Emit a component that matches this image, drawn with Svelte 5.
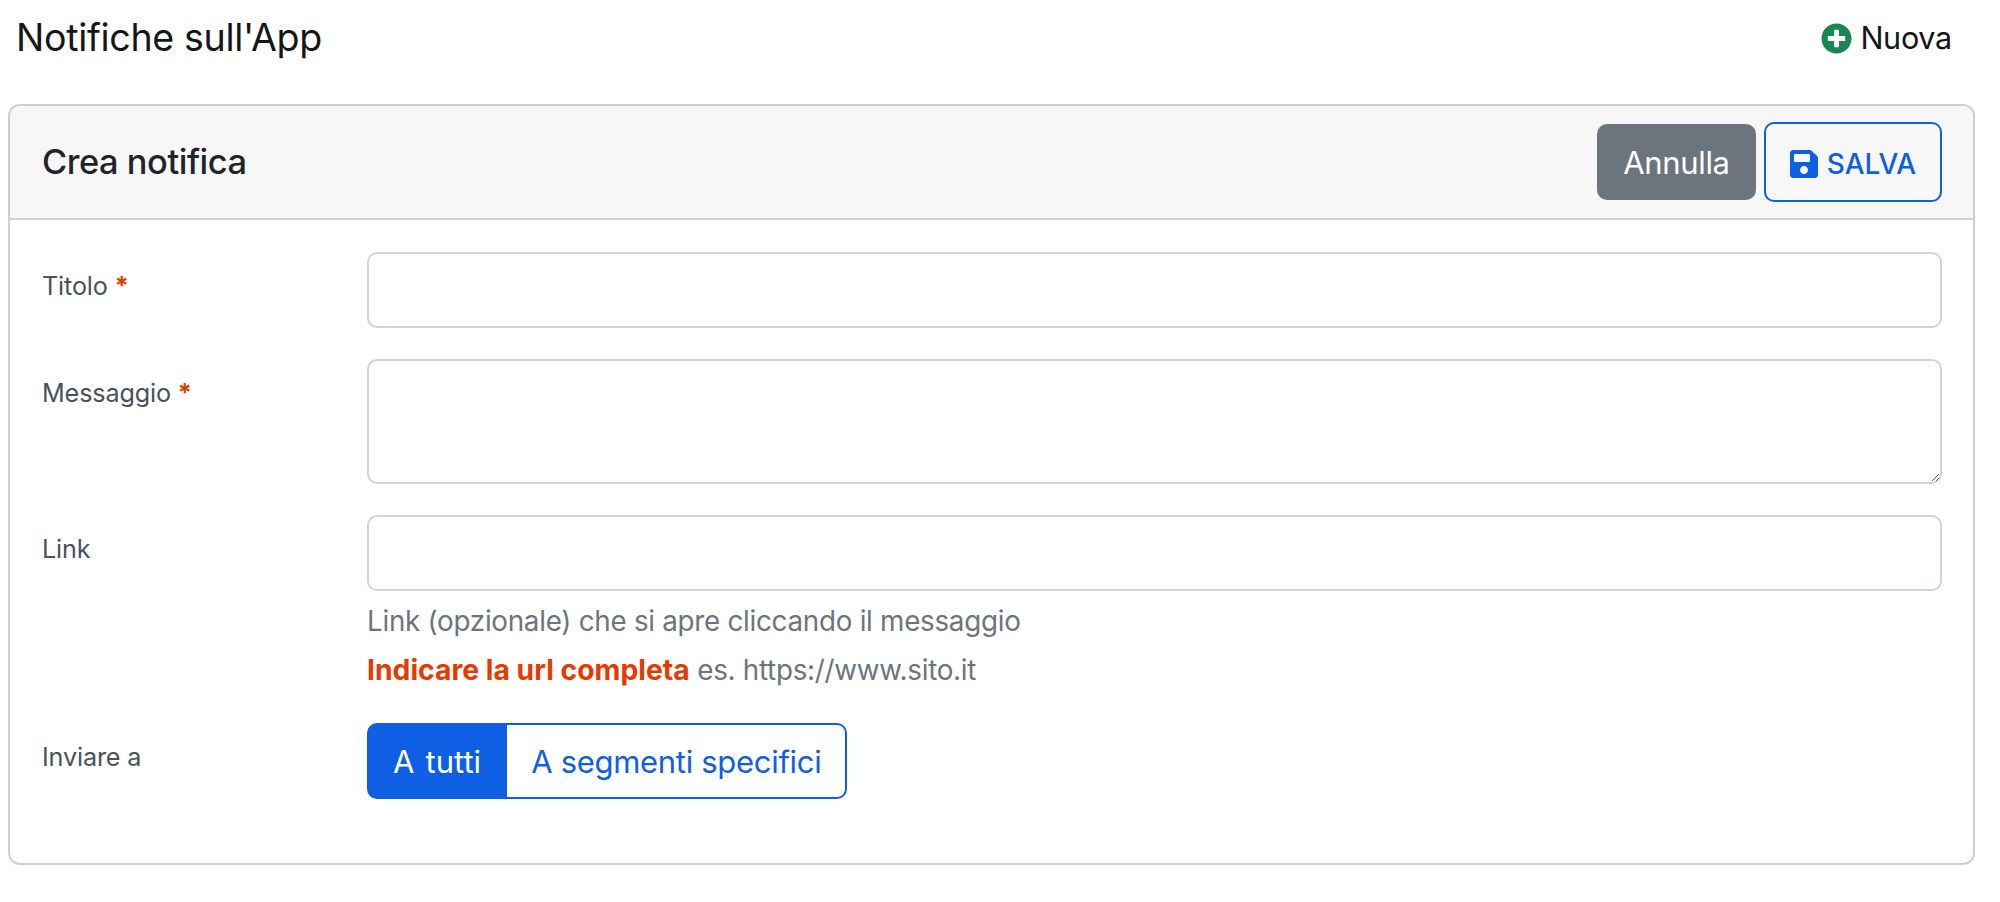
<script>
    let titolo = "";
    let messaggio = "";
    let link = "";
    let destinatari = "tutti";
</script>

<main>
    <div class="top">
        <h1>Notifiche sull'App</h1>
        <button class="nuova" type="button">
            <svg class="plus" viewBox="0 0 512 512" aria-hidden="true">
                <path d="M256 8C119 8 8 119 8 256s111 248 248 248 248-111 248-248S393 8 256 8zm144 276c0 6.6-5.4 12-12 12h-92v92c0 6.6-5.4 12-12 12h-56c-6.6 0-12-5.4-12-12v-92h-92c-6.6 0-12-5.4-12-12v-56c0-6.6 5.4-12 12-12h92v-92c0-6.6 5.4-12 12-12h56c6.6 0 12 5.4 12 12v92h92c6.6 0 12 5.4 12 12v56z" />
            </svg>
            Nuova
        </button>
    </div>

    <section class="card">
        <header>
            <h2>Crea notifica</h2>
            <div class="azioni">
                <button class="annulla" type="button">Annulla</button>
                <button class="salva" type="button">
                    <svg class="floppy" viewBox="0 0 448 512" aria-hidden="true">
                        <path d="M433.941 129.941l-83.882-83.882A48 48 0 0 0 316.118 32H48C21.49 32 0 53.49 0 80v352c0 26.51 21.49 48 48 48h352c26.51 0 48-21.49 48-48V163.882a48 48 0 0 0-14.059-33.941zM224 416c-35.346 0-64-28.654-64-64 0-35.346 28.654-64 64-64s64 28.654 64 64c0 35.346-28.654 64-64 64zm96-304.52V212c0 6.627-5.373 12-12 12H76c-6.627 0-12-5.373-12-12V108c0-6.627 5.373-12 12-12h228.52c3.183 0 6.235 1.264 8.485 3.515l3.48 3.48A11.996 11.996 0 0 1 320 111.48z" />
                    </svg>
                    SALVA
                </button>
            </div>
        </header>

        <form class="corpo">
            <label for="titolo">Titolo <span class="req">*</span></label>
            <div><input id="titolo" type="text" bind:value={titolo} /></div>

            <label for="messaggio">Messaggio <span class="req">*</span></label>
            <div><textarea id="messaggio" bind:value={messaggio}></textarea></div>

            <label for="link">Link</label>
            <div>
                <input id="link" type="text" bind:value={link} />
                <p class="aiuto primo">Link (opzionale) che si apre cliccando il messaggio</p>
                <p class="aiuto"><strong>Indicare la url completa</strong> es. https://www.sito.it</p>
            </div>

            <span class="etichetta">Inviare a</span>
            <div class="gruppo">
                <button type="button" class:attivo={destinatari === "tutti"} on:click={() => (destinatari = "tutti")}>A tutti</button>
                <button type="button" class:attivo={destinatari === "segmenti"} on:click={() => (destinatari = "segmenti")}>A segmenti specifici</button>
            </div>
        </form>
    </section>
</main>

<style>
    :global(body) {
        background: #fff;
        font-family: Inter, "Liberation Sans", sans-serif;
    }

    main {
        padding: 0 25px 37px 8px;
        color: #212529;
    }

    .top {
        height: 104px;
        display: flex;
        justify-content: space-between;
        align-items: flex-start;
        padding: 13px 0 0 8px;
        box-sizing: border-box;
    }

    h1 {
        margin: 0;
        font-size: 37.6px;
        font-weight: 400;
        letter-spacing: -0.33px;
        line-height: 50px;
        color: #161616;
    }

    .nuova {
        display: flex;
        align-items: center;
        gap: 8px;
        margin-right: 23px;
        padding: 0;
        border: 0;
        background: none;
        font: inherit;
        font-size: 30.6px;
        letter-spacing: -0.3px;
        line-height: 50px;
        color: #161616;
    }

    .plus {
        width: 31px;
        height: 31px;
        fill: #198754;
    }

    .card {
        height: 761px;
        box-sizing: border-box;
        border: 2px solid #cfcfcf;
        border-radius: 12px;
    }

    header {
        height: 114px;
        box-sizing: border-box;
        display: flex;
        justify-content: space-between;
        align-items: center;
        padding: 0 31px 0 32px;
        background: #f7f7f7;
        border-bottom: 2px solid #cfcfcf;
        border-radius: 10px 10px 0 0;
    }

    h2 {
        margin: 0;
        padding-bottom: 2px;
        font-size: 34.4px;
        font-weight: 500;
        letter-spacing: -0.45px;
        color: #212529;
    }

    .azioni {
        display: flex;
        align-items: center;
        gap: 8px;
    }

    .azioni button {
        font: inherit;
        border-radius: 10px;
        box-sizing: border-box;
    }

    .annulla {
        width: 159px;
        height: 76px;
        border: 0;
        background: #6c757d;
        color: #fff;
        font-size: 31px !important;
        letter-spacing: -0.35px;
    }

    .salva {
        width: 178px;
        height: 80px;
        display: flex;
        align-items: center;
        justify-content: center;
        gap: 9px;
        padding: 3px 0 0;
        border: 2px solid #0f5fe4;
        background: transparent;
        color: #0f5fe4;
        font-size: 28px !important;
        font-weight: 500 !important;
    }

    .floppy {
        width: 28px;
        height: 32px;
        fill: #0f5fe4;
    }

    .corpo {
        display: grid;
        grid-template-columns: 325px 1fr;
        row-gap: 31px;
        padding: 32px 31px 0 32px;
    }

    label,
    .etichetta {
        padding-top: 17px;
        font-size: 25.2px;
        letter-spacing: -0.15px;
        line-height: 34px;
        color: #4a5260;
    }

    .etichetta {
        padding-top: 19px;
    }

    .req {
        color: #e63b00;
        font-weight: 700;
    }

    input,
    textarea {
        display: block;
        width: 100%;
        box-sizing: border-box;
        border: 2px solid #ced4da;
        border-radius: 10px;
        background: #fff;
        font: inherit;
    }

    input {
        height: 76px;
    }

    textarea {
        height: 125px;
    }

    .aiuto {
        margin: 0;
        font-size: 27.8px;
        letter-spacing: -0.28px;
        line-height: 40px;
        color: #6c757d;
    }

    .aiuto.primo {
        margin: 10px 0 9px;
    }

    strong {
        color: #e63b00;
        font-size: 28.3px;
        font-weight: 700;
        letter-spacing: 0;
    }

    .gruppo {
        display: flex;
        margin-top: 2px;
    }

    .gruppo button {
        height: 76px;
        padding: 0 24px;
        border: 2px solid #0f5fe4;
        background: #fff;
        color: #0f5fe4;
        font: inherit;
        font-size: 31px;
        letter-spacing: -0.3px;
    }

    .gruppo button:first-child {
        padding: 0 24px;
        letter-spacing: 0;
        word-spacing: 2.5px;
        border-radius: 10px 0 0 10px;
    }

    .gruppo button:last-child {
        margin-left: -2px;
        border-radius: 0 10px 10px 0;
    }

    .gruppo button.attivo {
        background: #0f5fe4;
        color: #fff;
    }
</style>
